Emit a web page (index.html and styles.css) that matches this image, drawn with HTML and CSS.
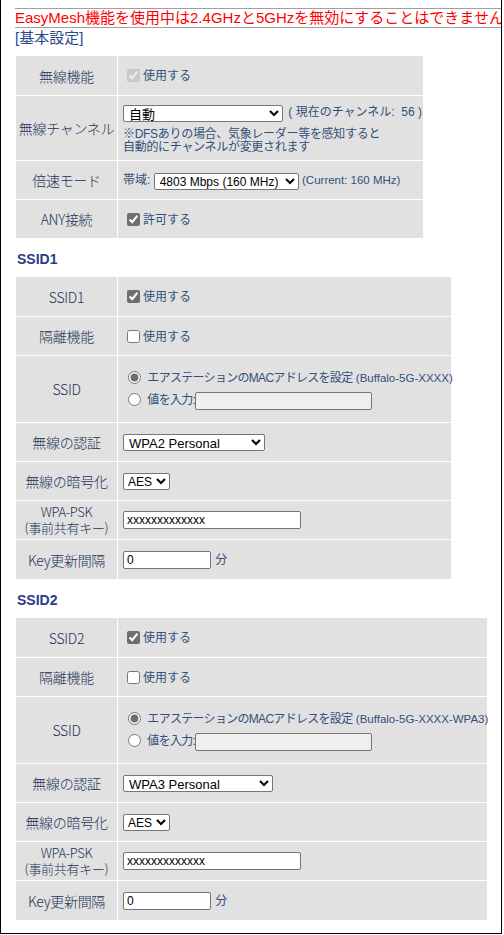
FILE: index.html
```html
<!DOCTYPE html>
<html lang="ja">
<head>
    <meta charset="UTF-8">
    <title>無線設定</title>
    <link rel="stylesheet" href="styles.css">
</head>
<body>
    <div class="frame">
        <div class="notice">EasyMesh機能を使用中は2.4GHzと5GHzを無効にすることはできません</div>
        <h2 class="section-title">[基本設定]</h2>

        <table class="form basic">
            <tr class="first">
                <th>無線機能</th>
                <td><label><input type="checkbox" checked disabled>使用する</label></td>
            </tr>
            <tr class="row-channel">
                <th>無線チャンネル</th>
                <td>
                    <select class="sel-channel"><option>自動</option></select>
                    <span class="aside">( 現在のチャンネル:&nbsp; 56 )</span>
                    <div class="note">※DFSありの場合、気象レーダー等を感知すると<br>自動的にチャンネルが変更されます</div>
                </td>
            </tr>
            <tr>
                <th>倍速モード</th>
                <td>帯域: <select class="sel-band"><option>4803 Mbps (160 MHz)</option></select> <span class="latin">(Current: 160 MHz)</span></td>
            </tr>
            <tr>
                <th>ANY接続</th>
                <td><label><input type="checkbox" checked>許可する</label></td>
            </tr>
        </table>

        <h3 class="ssid-title">SSID1</h3>
        <table class="form ssid1">
            <tr class="first">
                <th>SSID1</th>
                <td><label><input type="checkbox" checked>使用する</label></td>
            </tr>
            <tr>
                <th>隔離機能</th>
                <td><label><input type="checkbox">使用する</label></td>
            </tr>
            <tr class="row-ssid">
                <th>SSID</th>
                <td>
                    <div class="radio-line"><input type="radio" name="ssid1" checked> <span class="tight">エアステーションのMACアドレスを設定</span> <span class="latin">(Buffalo-5G-XXXX)</span></div>
                    <div class="radio-line"><input type="radio" name="ssid1"> <span class="tight">値を入力:</span><input type="text" class="ssid-input" disabled></div>
                </td>
            </tr>
            <tr>
                <th>無線の認証</th>
                <td><select class="sel-auth"><option>WPA2 Personal</option></select></td>
            </tr>
            <tr>
                <th>無線の暗号化</th>
                <td><select class="sel-enc"><option>AES</option></select></td>
            </tr>
            <tr>
                <th class="two-line">WPA-PSK<br>(事前共有キー)</th>
                <td><input type="text" class="psk" value="xxxxxxxxxxxxx"></td>
            </tr>
            <tr class="last">
                <th>Key更新間隔</th>
                <td><input type="text" class="interval" value="0"> 分</td>
            </tr>
        </table>

        <h3 class="ssid-title">SSID2</h3>
        <table class="form ssid2">
            <tr class="first">
                <th>SSID2</th>
                <td><label><input type="checkbox" checked>使用する</label></td>
            </tr>
            <tr>
                <th>隔離機能</th>
                <td><label><input type="checkbox">使用する</label></td>
            </tr>
            <tr class="row-ssid">
                <th>SSID</th>
                <td>
                    <div class="radio-line"><input type="radio" name="ssid2" checked> <span class="tight">エアステーションのMACアドレスを設定</span> <span class="latin">(Buffalo-5G-XXXX-WPA3)</span></div>
                    <div class="radio-line"><input type="radio" name="ssid2"> <span class="tight">値を入力:</span><input type="text" class="ssid-input" disabled></div>
                </td>
            </tr>
            <tr>
                <th>無線の認証</th>
                <td><select class="sel-auth wide"><option>WPA3 Personal</option></select></td>
            </tr>
            <tr>
                <th>無線の暗号化</th>
                <td><select class="sel-enc"><option>AES</option></select></td>
            </tr>
            <tr>
                <th class="two-line">WPA-PSK<br>(事前共有キー)</th>
                <td><input type="text" class="psk" value="xxxxxxxxxxxxx"></td>
            </tr>
            <tr class="last">
                <th>Key更新間隔</th>
                <td><input type="text" class="interval" value="0"> 分</td>
            </tr>
        </table>
    </div>
</body>
</html>
```

FILE: styles.css
```css
body {
    margin: 0;
    background: #fff;
    font-family: "Liberation Sans", "Noto Sans CJK JP", sans-serif;
}
.frame {
    box-sizing: border-box;
    width: 502px;
    height: 934px;
    padding: 8px 0 0 14px;
    border: 1px solid #000;
    border-top: none;
    overflow: hidden;
}
.notice {
    border-top: 1px solid #a0a0a0;
    border-bottom: 1px solid #a0a0a0;
    color: #ff0000;
    font-size: 15px;
    line-height: 18px;
    white-space: nowrap;
    overflow: hidden;
}
.section-title {
    margin: 0 0 7px;
    font-size: 15px;
    line-height: 20px;
    font-weight: normal;
    color: #2a4a8a;
}
.ssid-title {
    margin: 10px 0 7px 2px;
    font-size: 14px;
    line-height: 20px;
    font-weight: bold;
    color: #2b3a8a;
}
.form {
    table-layout: fixed;
    border-collapse: separate;
    border-spacing: 1px;
}
.basic { width: 409px; }
.ssid1 { width: 437px; }
.ssid2 { width: 473px; }
.form th,
.form td {
    height: 38px;
    background: #e1e1e1;
    padding: 0;
}
.form th {
    width: 101px;
    font-family: "Noto Sans CJK JP", sans-serif;
    font-size: 14px;
    font-weight: 300;
    letter-spacing: -0.3px;
    color: #223355;
    text-align: center;
}
.form th.two-line {
    font-size: 13px;
    line-height: 16px;
}
.form td {
    padding: 0 5px;
    font-size: 12px;
    color: #33507a;
    text-align: left;
    white-space: nowrap;
}
.form .first td,
.form .first th,
.form .last td,
.form .last th { height: 39px; }
.form .row-channel td,
.form .row-channel th { height: 64px; }
.form .row-ssid td,
.form .row-ssid th { height: 66px; }

input[type="checkbox"],
input[type="radio"] {
    accent-color: #6e6e6e;
    vertical-align: -2px;
}
label {
    color: #33507a;
}
select {
    height: 17px;
    padding: 0 0 0 1px;
    font-family: "Liberation Sans", "Noto Sans CJK JP", sans-serif;
    font-size: 13px;
    color: #000;
    background: #fff;
    border: 1px solid #767676;
    border-radius: 2px;
    vertical-align: middle;
}
.sel-channel { width: 160px; }
.sel-band { width: 145px; font-size: 12px; }
.sel-auth { width: 142px; }
.sel-auth.wide { width: 150px; }
.sel-enc { width: 47px; font-size: 12px; padding: 0; }
.aside { margin-left: 2px; }
.latin {
    font-family: "Liberation Sans", sans-serif;
    font-size: 11.5px;
}
.tight {
    letter-spacing: -0.7px;
}
.note {
    margin-top: 6px;
    font-size: 12px;
    line-height: 13px;
    letter-spacing: -0.3px;
}
.radio-line {
    height: 22px;
    line-height: 22px;
}
input[type="text"] {
    box-sizing: border-box;
    height: 18px;
    padding: 0 3px;
    font-family: "Liberation Sans", sans-serif;
    font-size: 12px;
    color: #000;
    border: 1px solid #767676;
    border-radius: 2px;
    vertical-align: middle;
}
.ssid-input {
    width: 177px;
    height: 19px;
    background: #efefef;
    border-color: #c8c8c8;
}
.psk { width: 178px; }
.interval { width: 88px; margin-right: 1px; }
```
